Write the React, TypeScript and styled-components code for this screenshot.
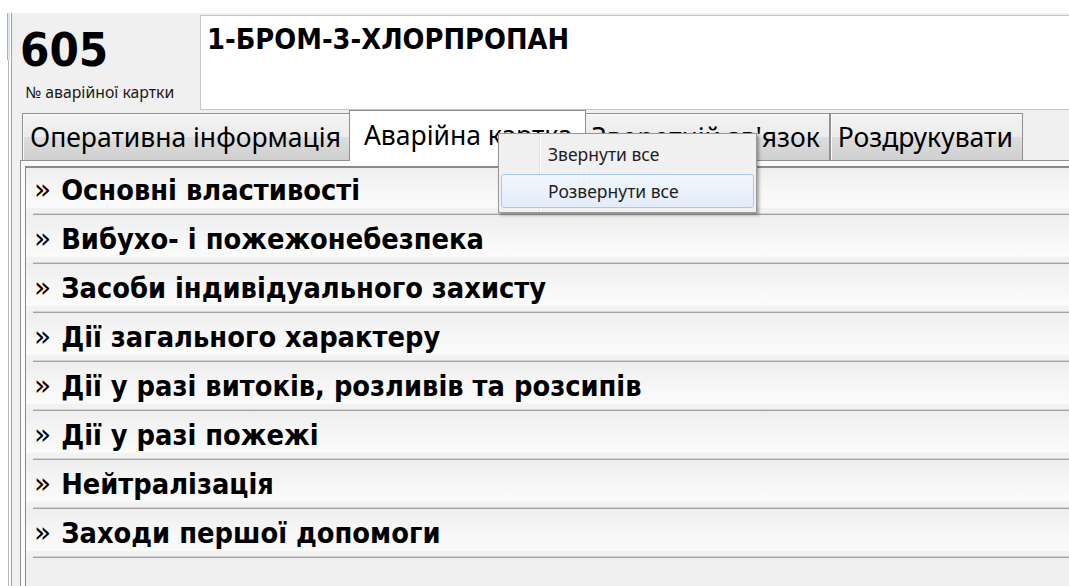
import React from "react";
import styled, { createGlobalStyle } from "styled-components";

const sections = [
  "Основні властивості",
  "Вибухо- і пожежонебезпека",
  "Засоби індивідуального захисту",
  "Дії загального характеру",
  "Дії у разі витоків, розливів та розсипів",
  "Дії у разі пожежі",
  "Нейтралізація",
  "Заходи першої допомоги",
];

const tabs = ["Оперативна інформація", "Аварійна картка", "Зворотній зв'язок", "Роздрукувати"];

export default function App() {
  return (
    <>
      <GlobalStyle />
      <Page>
        <Rail />
        <Workspace>
          <Header>
            <CardNumber>
              <Number>605</Number>
              <Caption>№ аварійної картки</Caption>
            </CardNumber>
            <TitleBox>1-БРОМ-3-ХЛОРПРОПАН</TitleBox>
          </Header>
          <TabStrip>
            {tabs.map((t, i) => (
              <Tab key={t} $active={i === 1}>
                {t}
              </Tab>
            ))}
          </TabStrip>
          <TabPage>
            <ListBox>
              <ListScroll>
                {sections.map((s) => (
                  <Section key={s}>
                    <SectionHead>
                      <Chevron>»</Chevron>
                      {s}
                    </SectionHead>
                    <Divider />
                  </Section>
                ))}
              </ListScroll>
            </ListBox>
          </TabPage>
        </Workspace>
        <ContextMenu>
          <MenuItem>Звернути все</MenuItem>
          <MenuItem $hover>Розвернути все</MenuItem>
        </ContextMenu>
      </Page>
    </>
  );
}

const GlobalStyle = createGlobalStyle`
  html, body {
    margin: 0;
    padding: 0;
    background: #ffffff;
    overflow: hidden;
  }
  * { box-sizing: border-box; }
`;

const Page = styled.div`
  position: relative;
  display: flex;
  height: 100vh;
  padding-top: 13px;
`;

const Rail = styled.div`
  width: 12px;
  flex-shrink: 0;
  border-right: 1px solid #a3a3a3;
  background:
    linear-gradient(to right, transparent 7px, #9fb4cc 7px, #9fb4cc 8px, #dbe6f3 8px, #dbe6f3 10px, transparent 10px) top / 100% 47px no-repeat,
    linear-gradient(to right, #ffffff 8px, #b9b9b9 8px, #b9b9b9 9px, #ffffff 9px);
`;

const Workspace = styled.div`
  flex: 1;
  min-width: 0;
  display: flex;
  flex-direction: column;
  background: #f0f0f0;
`;

const Header = styled.div`
  display: flex;
  height: 97px;
  flex-shrink: 0;
`;

const CardNumber = styled.div`
  width: 188px;
  padding: 12px 0 0 8px;
  display: flex;
  flex-direction: column;
`;

const Number = styled.div`
  font-family: "DejaVu Sans Condensed", "DejaVu Sans", sans-serif;
  font-weight: bold;
  font-size: 47px;
  line-height: 50px;
  color: #000;
`;

const Caption = styled.div`
  margin-top: 7px;
  padding-left: 5px;
  font-family: "Noto Sans", sans-serif;
  font-size: 15.8px;
  line-height: 20px;
  color: #1a1a1a;
`;

const TitleBox = styled.div`
  flex: 1;
  margin-top: 2px;
  background: #ffffff;
  border: 1px solid #c6c6c6;
  border-right: none;
  padding: 5px 0 0 6px;
  font-family: "DejaVu Sans Condensed", "DejaVu Sans", sans-serif;
  font-weight: bold;
  font-size: 28.7px;
  line-height: 36px;
  color: #000;
`;

const TabStrip = styled.div`
  display: flex;
  align-items: flex-end;
  height: 50px;
  flex-shrink: 0;
  padding-left: 10px;
  position: relative;
  z-index: 1;
`;

const Tab = styled.div<{ $active?: boolean }>`
  height: ${(p) => (p.$active ? "51px" : "47px")};
  margin: ${(p) => (p.$active ? "0 -2px -1px" : "0")};
  padding: ${(p) => (p.$active ? "0 12px 3px 14px" : "0 9px 0 7px")};
  border: 1px solid #8e8f8f;
  border-bottom: none;
  background: ${(p) =>
    p.$active ? "#ffffff" : "linear-gradient(to bottom, #f3f3f3 0%, #ebebeb 50%, #dddddd 51%, #cfcfcf 100%)"};
  box-shadow: ${(p) => (p.$active ? "none" : "inset 1px 1px 0 #fbfbfb")};
  position: relative;
  z-index: ${(p) => (p.$active ? 2 : 1)};
  display: flex;
  align-items: center;
  font-family: "Noto Sans", sans-serif;
  font-size: 26.5px;
  color: #000;
  white-space: nowrap;
`;

const TabPage = styled.div`
  flex: 1;
  margin-left: 8px;
  border-top: 1px solid #8e8f8f;
  border-left: 1px solid #8e8f8f;
  background: #fbfbfb;
  padding: 5px 0 0 4px;
  display: flex;
  min-height: 0;
`;

const ListBox = styled.div`
  flex: 1;
  border-top: 2px solid #8a8a8a;
  border-left: 1px solid #8a8a8a;
  background: #f0f0f0;
  overflow: hidden;
`;

const ListScroll = styled.div`
  margin-top: -2px;
`;

const Section = styled.div`
  display: flex;
  flex-direction: column;
`;

const SectionHead = styled.div`
  height: 47px;
  display: flex;
  align-items: center;
  padding-left: 8px;
  background: linear-gradient(to bottom, #eeeeee 0%, #f7f7f7 55%, #fbfbfb 88%, #f2f2f2 89%, #f2f2f2 100%);
  font-family: "DejaVu Sans Condensed", "DejaVu Sans", sans-serif;
  font-weight: bold;
  font-size: 28.7px;
  color: #000;
  white-space: nowrap;
`;

const Chevron = styled.span`
  font-family: "DejaVu Sans", sans-serif;
  font-weight: normal;
  font-size: 28px;
  margin-right: 10px;
`;

const Divider = styled.div`
  margin-left: 7px;
  height: 2px;
  border-top: 1px solid #d3d3d3;
  border-bottom: 1px solid #a3a3a3;
`;

const ContextMenu = styled.div`
  position: absolute;
  left: 498px;
  top: 133px;
  width: 259px;
  height: 80px;
  padding: 3px 2px;
  border: 1px solid #979797;
  background:
    linear-gradient(to right, transparent 40px, #e2e3e3 40px, #e2e3e3 41px, #ffffff 41px, #ffffff 42px, transparent 42px),
    #f0f0f0;
  box-shadow: 2px 2px 3px rgba(0, 0, 0, 0.35);
  display: flex;
  flex-direction: column;
  gap: 3px;
  z-index: 10;
`;

const MenuItem = styled.div<{ $hover?: boolean }>`
  height: 34px;
  display: flex;
  align-items: center;
  padding-left: 46px;
  border: 1px solid ${(p) => (p.$hover ? "#a8caf0" : "transparent")};
  border-radius: 3px;
  background: ${(p) => (p.$hover ? "linear-gradient(to bottom, #f1f6fc, #e3ecf8)" : "transparent")};
  font-family: "Noto Sans", sans-serif;
  font-size: 17.5px;
  color: #1e1e1e;
  white-space: nowrap;
`;
